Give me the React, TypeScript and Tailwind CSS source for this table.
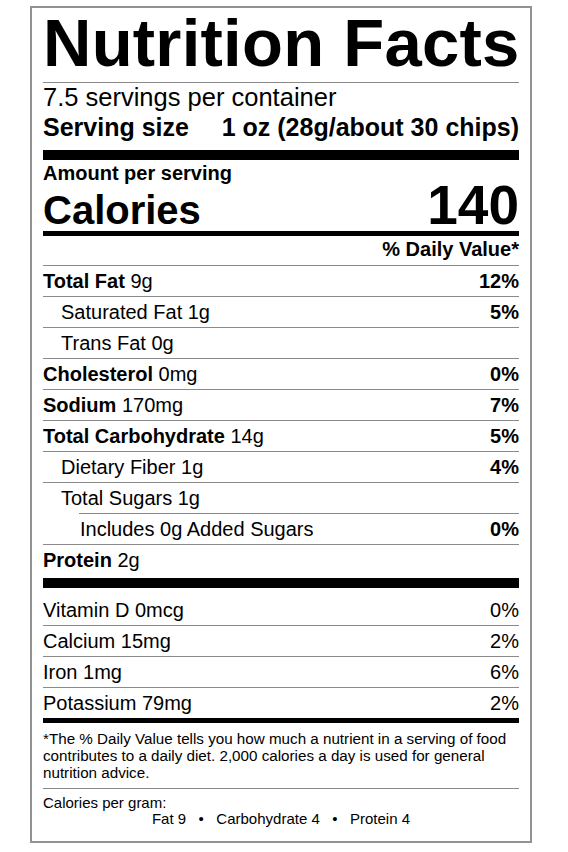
import React from "react";

type Row = {
  label: string;
  amount: string;
  dv?: string;
  bold?: boolean;
  indent?: number;
};

const rows: Row[] = [
  { label: "Total Fat", amount: "9g", dv: "12%", bold: true },
  { label: "Saturated Fat", amount: "1g", dv: "5%", indent: 1 },
  { label: "Trans Fat", amount: "0g", indent: 1 },
  { label: "Cholesterol", amount: "0mg", dv: "0%", bold: true },
  { label: "Sodium", amount: "170mg", dv: "7%", bold: true },
  { label: "Total Carbohydrate", amount: "14g", dv: "5%", bold: true },
  { label: "Dietary Fiber", amount: "1g", dv: "4%", indent: 1 },
  { label: "Total Sugars", amount: "1g", indent: 1 },
  { label: "Includes 0g Added Sugars", amount: "", dv: "0%", indent: 2 },
  { label: "Protein", amount: "2g", bold: true },
];

const vitamins = [
  { label: "Vitamin D 0mcg", dv: "0%" },
  { label: "Calcium 15mg", dv: "2%" },
  { label: "Iron 1mg", dv: "6%" },
  { label: "Potassium 79mg", dv: "2%" },
];

export default function App() {
  return (
    <div
      className="min-h-screen bg-white pt-[6px] pl-[30px] text-black"
      style={{ fontFamily: '"Liberation Sans", Arial, sans-serif' }}
    >
      <div className="w-[502px] border-2 border-[#929292] px-[11px] pb-[14px]">
        {/* header */}
        <h1 className="text-[67px] font-bold leading-none tracking-[0.25px] whitespace-nowrap pt-[1px] pb-[6px] border-b border-[#8a8a8a]">
          Nutrition Facts
        </h1>
        <p className="text-[25.5px] leading-[28px]">7.5 servings per container</p>
        <div className="flex justify-between text-[25px] font-bold leading-[28px] pt-[2px]">
          <span>Serving size</span>
          <span>1 oz (28g/about 30 chips)</span>
        </div>
        <div className="h-[10px] bg-black mt-[9px]" />

        {/* calories */}
        <p className="text-[20px] font-bold leading-[22px] pt-[2px]">Amount per serving</p>
        <div className="flex justify-between items-baseline font-bold leading-[42px]">
          <span className="text-[40px]">Calories</span>
          <span className="text-[55px]">140</span>
        </div>
        <div className="h-[5px] bg-black" />
        <p className="text-right text-[20px] font-bold leading-[26px] pb-[3px]">% Daily Value*</p>

        {/* nutrients */}
        {rows.map((r) => (
          <div
            key={r.label}
            className={
              "flex justify-between items-center h-[31px] border-t border-[#8a8a8a] text-[20px] " +
              (r.indent === 2 ? "ml-[36px] pl-[1px]" : r.indent === 1 ? "pl-[18px]" : "")
            }
          >
            <span>
              {r.bold ? <b>{r.label}</b> : r.label}
              {r.amount ? " " + r.amount : ""}
            </span>
            {r.dv && <b>{r.dv}</b>}
          </div>
        ))}
        <div className="h-[10px] bg-black mt-[3px]" />

        {/* vitamins */}
        <div className="pt-[6px]">
          {vitamins.map((v, i) => (
            <div
              key={v.label}
              className={
                "flex justify-between items-center h-[31px] text-[20px] " +
                (i > 0 ? "border-t border-[#8a8a8a]" : "")
              }
            >
              <span>{v.label}</span>
              <span>{v.dv}</span>
            </div>
          ))}
        </div>
        <div className="h-[5px] bg-black" />

        {/* footnote */}
        <p className="text-[15.2px] leading-[17px] pt-[7px] pb-[7px] border-b border-[#8a8a8a]">
          *The % Daily Value tells you how much a nutrient in a serving of food contributes to a daily diet. 2,000 calories a day is used for general nutrition advice.
        </p>
        <p className="text-[15px] leading-[16px] pt-[6px]">Calories per gram:</p>
        <p className="text-[15px] leading-[16px] text-center">
          Fat 9 &nbsp;&nbsp;•&nbsp;&nbsp; Carbohydrate 4 &nbsp;&nbsp;•&nbsp;&nbsp; Protein 4
        </p>
      </div>
    </div>
  );
}
